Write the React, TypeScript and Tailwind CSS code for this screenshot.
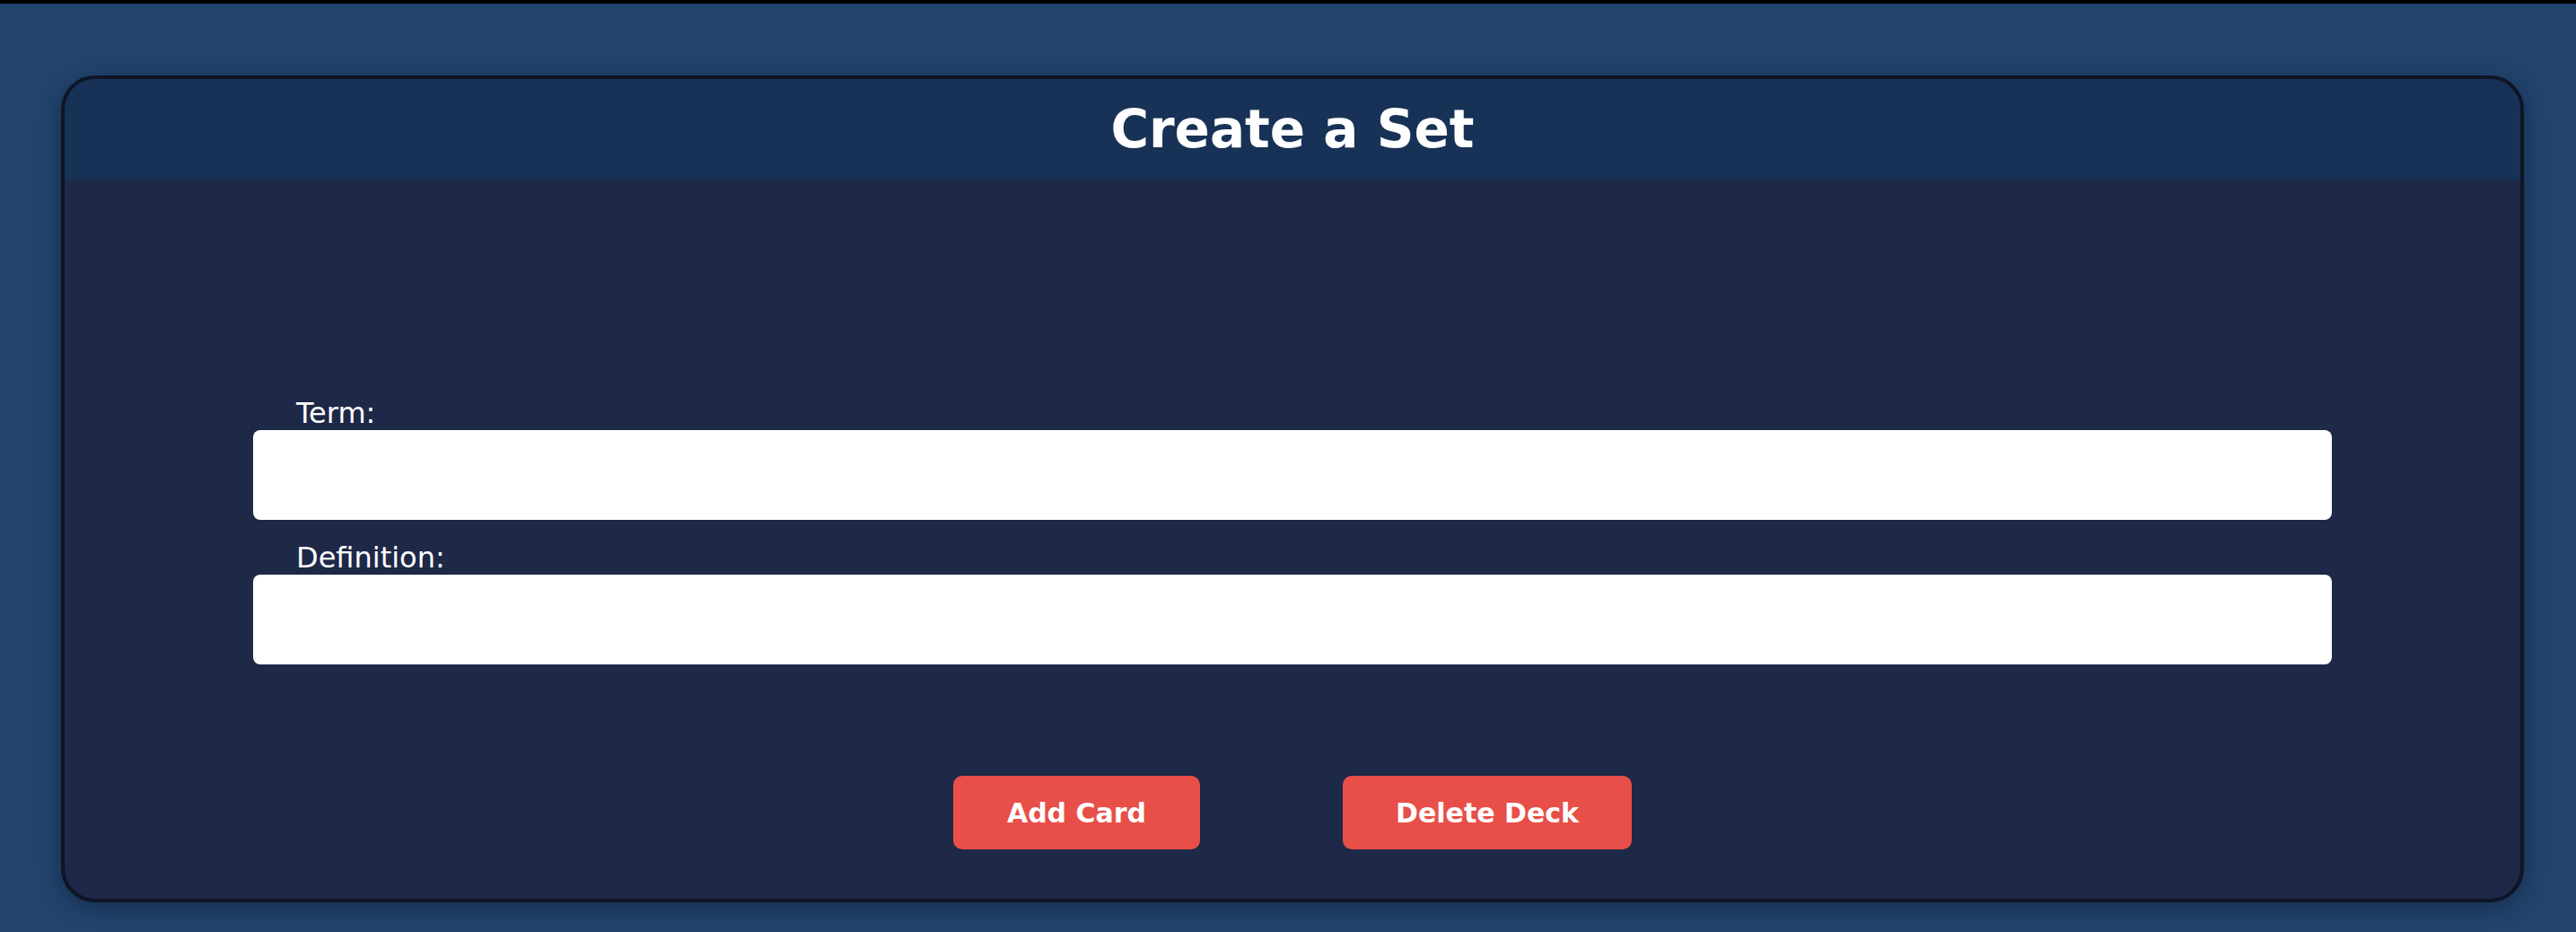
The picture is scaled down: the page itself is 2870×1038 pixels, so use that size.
const font = "font-['DejaVu_Sans','Verdana',sans-serif]";

const Field = ({ label }: { label: string }) => (
  <div className="flex flex-col">
    <label className={`pl-[48px] text-[32px] leading-[38px] text-white ${font}`}>{label}</label>
    <input type="text" className="h-[100px] w-full rounded-[8px] bg-white px-4 text-[28px] text-black outline-none" />
  </div>
);

export default function App() {
  return (
    <div className="min-h-[1038px] w-full bg-[#21436d]">
      <div className="h-[4px] w-full bg-black" />
      <div className="pt-[80px]">
        <div className="ml-[68px] w-[2744px] overflow-hidden rounded-[38px] border-4 border-[#0e1526] bg-[#1e2847] shadow-[0_6px_24px_rgba(0,0,0,0.3)]">
          <div className="flex h-[112px] items-center justify-center bg-[#173256]">
            <h1 className={`text-[58px] font-bold text-white ${font}`}>Create a Set</h1>
          </div>
          <div className="flex flex-col px-[210px] pt-[241px] pb-[55px]">
            <div className="flex flex-col gap-[23px]">
              <Field label="Term:" />
              <Field label="Definition:" />
            </div>
            <div className="mt-[124px] flex justify-center gap-[159px]">
              <button className={`h-[82px] rounded-[10px] bg-[#e84f48] px-[60px] text-[30px] font-bold text-white ${font}`}>
                Add Card
              </button>
              <button className={`h-[82px] rounded-[10px] bg-[#e84f48] px-[59px] text-[30px] font-bold text-white ${font}`}>
                Delete Deck
              </button>
            </div>
          </div>
        </div>
      </div>
    </div>
  );
}
